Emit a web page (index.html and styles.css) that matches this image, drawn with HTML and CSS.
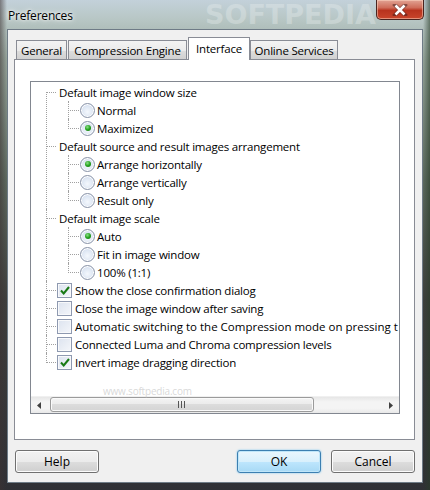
FILE: index.html
```html
<!DOCTYPE html>
<html lang="en">
    <head>
        <meta charset="UTF-8" />
        <title>Preferences</title>
        <link rel="stylesheet" href="styles.css">
    </head>
    <body>
        <div class="window">
            <div class="titlebar">
                <div class="title">Preferences</div>
                <div class="watermark">SOFTPEDIA</div>
                <div class="close">
                    <svg width="16" height="12" viewBox="0 0 16 12">
                        <path d="M3 1 L13 11 M13 1 L3 11" stroke="#3a1a1a" stroke-width="4" stroke-linecap="square" opacity="0.5"/>
                        <path d="M3.5 1.5 L12.5 10.5 M12.5 1.5 L3.5 10.5" stroke="#fff" stroke-width="2.6"/>
                    </svg>
                </div>
            </div>
            <div class="client">
                <div class="tabs">
                    <div class="tab tab-general">General</div>
                    <div class="tab tab-compression">Compression Engine</div>
                    <div class="tab tab-interface active">Interface</div>
                    <div class="tab tab-online">Online Services</div>
                </div>
                <div class="panel">
                    <div class="treebox">
                        <div class="tree-view">
                            <ul class="tree">
                                <li>
                                    <div class="row group">Default image window size</div>
                                    <ul>
                                        <li><div class="row"><span class="radio"></span>Normal</div></li>
                                        <li><div class="row"><span class="radio checked"></span>Maximized</div></li>
                                    </ul>
                                </li>
                                <li>
                                    <div class="row group">Default source and result images arrangement</div>
                                    <ul>
                                        <li><div class="row"><span class="radio checked"></span>Arrange horizontally</div></li>
                                        <li><div class="row"><span class="radio"></span>Arrange vertically</div></li>
                                        <li><div class="row"><span class="radio"></span>Result only</div></li>
                                    </ul>
                                </li>
                                <li>
                                    <div class="row group">Default image scale</div>
                                    <ul>
                                        <li><div class="row"><span class="radio checked"></span>Auto</div></li>
                                        <li><div class="row"><span class="radio"></span>Fit in image window</div></li>
                                        <li><div class="row"><span class="radio"></span>100% (1:1)</div></li>
                                    </ul>
                                </li>
                                <li><div class="row"><span class="check checked"></span>Show the close confirmation dialog</div></li>
                                <li><div class="row"><span class="check"></span>Close the image window after saving</div></li>
                                <li><div class="row long"><span class="check"></span>Automatic switching to the Compression mode on pressing t</div></li>
                                <li><div class="row"><span class="check"></span>Connected Luma and Chroma compression levels</div></li>
                                <li><div class="row"><span class="check checked"></span>Invert image dragging direction</div></li>
                            </ul>
                        </div>
                        <div class="hscroll">
                            <div class="arrow">
                                <svg width="5" height="7" viewBox="0 0 5 7"><path d="M4 0 L0 3.5 L4 7 Z" fill="#404040"/></svg>
                            </div>
                            <div class="track">
                                <div class="thumb">
                                    <svg width="8" height="7" viewBox="0 0 8 7"><path d="M0.5 0 V7 M3.5 0 V7 M6.5 0 V7" stroke="#555" stroke-width="1"/></svg>
                                </div>
                            </div>
                            <div class="arrow">
                                <svg width="5" height="7" viewBox="0 0 5 7"><path d="M1 0 L5 3.5 L1 7 Z" fill="#404040"/></svg>
                            </div>
                        </div>
                        <div class="watermark-small">www.softpedia.com</div>
                    </div>
                </div>
                <div class="buttons">
                    <button class="button">Help</button>
                    <div class="spacer"></div>
                    <button class="button default">OK</button>
                    <button class="button">Cancel</button>
                </div>
            </div>
        </div>
    </body>
</html>
```

FILE: styles.css
```css
* {
    box-sizing: border-box;
}
body {
    margin: 0;
    font-family: "Open Sans", "Noto Sans", sans-serif;
    font-size: 11.5px;
    letter-spacing: -0.2px;
    color: #000;
}
.window {
    width: 430px;
    height: 490px;
    padding: 0 7px 7px 7px;
    display: flex;
    flex-direction: column;
    background:
        linear-gradient(to right, rgba(60, 50, 50, 0.55) 0, rgba(60, 50, 50, 0) 7px, rgba(60, 50, 50, 0) 423px, rgba(40, 60, 40, 0.6) 430px),
        linear-gradient(to bottom, #c3d1da 0, #b7c6c4 20px, #95a49a 60px, #5d6a5f 180px, #3e3f3d 300px, #2f3035 490px);
}
.titlebar {
    height: 29px;
    display: flex;
    align-items: flex-start;
    position: relative;
}
.title {
    padding: 8px 0 0 1px;
    font-size: 12px;
    line-height: 16px;
    text-shadow: 0 0 6px #fff, 0 0 3px #fff;
}
.watermark {
    position: absolute;
    left: 198px;
    top: -1px;
    font-family: "DejaVu Sans", sans-serif;
    font-weight: bold;
    font-size: 27px;
    letter-spacing: 0;
    color: rgba(235, 240, 240, 0.35);
}
.close {
    margin-left: auto;
    margin-right: -1px;
    width: 48px;
    height: 20px;
    border: 1px solid #4a2420;
    border-top: none;
    border-radius: 0 0 5px 5px;
    background: linear-gradient(to bottom, #e2a394 0, #cf6d5a 40%, #b8331e 55%, #c9452b 100%);
    box-shadow: inset 0 0 0 1px rgba(255, 220, 200, 0.5);
    display: flex;
    justify-content: center;
    align-items: center;
    position: relative;
    z-index: 1;
}
.client {
    flex: 1;
    background-color: #f0f0f0;
    border: 1px solid #6e7b86;
    padding: 8px 7px 8px 6px;
    display: flex;
    flex-direction: column;
}
.tabs {
    height: 22px;
    display: flex;
    align-items: flex-end;
    margin-bottom: -1px;
    padding-left: 2px;
}
.tab {
    height: 20px;
    border: 1px solid #898c95;
    border-bottom: none;
    background: linear-gradient(to bottom, #f3f3f3 0, #ebebeb 50%, #dddddd 51%, #cfcfcf 100%);
    padding-top: 1px;
    line-height: 18px;
    text-align: center;
    white-space: nowrap;
}
.tab-general {
    width: 51px;
}
.tab-compression {
    width: 119px;
    margin-left: 1px;
}
.tab-interface {
    width: 62px;
    margin-left: 1px;
}
.tab-online {
    width: 88px;
}
.tab.active {
    height: 23px;
    background: #fff;
    position: relative;
    z-index: 1;
    line-height: 20px;
}
.panel {
    height: 381px;
    border: 1px solid #898c95;
    background-color: #fff;
    padding: 21px 14px 0 15px;
}
.treebox {
    width: 370px;
    height: 333px;
    border: 1px solid #828790;
    display: flex;
    flex-direction: column;
    position: relative;
}
.tree-view {
    flex: 1;
    overflow: hidden;
    padding: 1px 0 0 26px;
}
.tree,
.tree ul {
    list-style: none;
    margin: 0;
    padding: 0;
}
.tree ul {
    padding-left: 23px;
}
.tree li {
    position: relative;
}
.tree li::before {
    content: "";
    position: absolute;
    left: -11px;
    top: 9px;
    width: 10px;
    border-top: 1px dotted #a0a0a0;
}
.tree li::after {
    content: "";
    position: absolute;
    left: -11px;
    top: 0;
    bottom: 0;
    border-left: 1px dotted #a0a0a0;
}
.tree > li:first-child::after {
    top: 9px;
}
.tree li:last-child::after {
    bottom: auto;
    height: 10px;
}
.tree ul li::before {
    left: -12px;
    width: 11px;
}
.tree ul li::after {
    left: -12px;
}
.row {
    height: 18px;
    display: flex;
    align-items: center;
    white-space: nowrap;
    line-height: 18px;
}
.row.long {
    letter-spacing: 0;
}
.row.group {
    padding: 2px 0 0 2px;
}
.row:has(.radio),
.row:has(.check) {
    padding-top: 2px;
}
.radio {
    flex-shrink: 0;
    width: 15px;
    height: 15px;
    border-radius: 50%;
    border: 1px solid #8a94a8;
    background: radial-gradient(circle at 50% 60%, #f4f8fd 0, #dde6f3 55%, #c4d1e6 100%);
    box-shadow: inset 0 0 0 1px #fff;
    margin-right: 2px;
    margin-top: -2px;
    display: flex;
    justify-content: center;
    align-items: center;
}
.radio.checked::after {
    content: "";
    width: 6px;
    height: 6px;
    border-radius: 50%;
    background: radial-gradient(circle at 40% 35%, #8fe08a 0, #25a31f 50%, #106a0c 100%);
}
.check {
    flex-shrink: 0;
    width: 15px;
    height: 15px;
    border: 1px solid #8e99b0;
    background: linear-gradient(135deg, #dce3ef 0, #f4f6fa 100%);
    box-shadow: inset 0 0 0 1px #f8f9fb;
    margin-right: 3px;
    margin-top: -2px;
    position: relative;
}
.check.checked::after {
    content: "";
    position: absolute;
    left: 2px;
    top: 2px;
    width: 10px;
    height: 9px;
    background: url("data:image/svg+xml;utf8,<svg xmlns='http://www.w3.org/2000/svg' width='10' height='9' viewBox='0 0 10 9'><path d='M1 4.5 L3.7 7.5 L9 1' fill='none' stroke='%23197a15' stroke-width='2'/></svg>");
}
.watermark-small {
    position: absolute;
    left: 72px;
    top: 302px;
    font-size: 10px;
    color: rgba(190, 190, 190, 0.6);
}
.hscroll {
    height: 17px;
    display: flex;
    background: linear-gradient(to bottom, #e6e6e6 0, #f4f4f4 30%, #f4f4f4 70%, #e8e8e8 100%);
    border-top: 1px solid #f0f0f0;
}
.arrow {
    width: 17px;
    display: flex;
    justify-content: center;
    align-items: center;
}
.track {
    flex: 1;
    padding: 0 2px 1px 2px;
}
.thumb {
    width: 264px;
    height: 15px;
    border: 1px solid #9b9b9b;
    border-radius: 3px;
    background: linear-gradient(to bottom, #f4f4f4 0, #ececec 45%, #dcdcdc 50%, #d4d4d4 100%);
    box-shadow: inset 0 0 0 1px #fafafa;
    display: flex;
    justify-content: center;
    align-items: center;
}
.buttons {
    margin-top: 10px;
    display: flex;
    padding-left: 1px;
}
.spacer {
    flex: 1;
}
.button {
    width: 84px;
    height: 23px;
    font-family: inherit;
    font-size: 12px;
    letter-spacing: 0;
    color: #000;
    border: 1px solid #707070;
    border-radius: 3px;
    background: linear-gradient(to bottom, #f2f2f2 0, #ebebeb 50%, #dddddd 51%, #cfcfcf 100%);
    box-shadow: inset 0 0 0 1px #fcfcfc;
    padding: 0;
}
.button + .button {
    margin-left: 10px;
}
.button.default {
    border-color: #3c7fb1;
    background: linear-gradient(to bottom, #eaf6fd 0, #d9f0fc 50%, #bee6fd 51%, #a7d9f5 100%);
    box-shadow: inset 0 0 0 1px #c0e6f9, 0 0 2px #6fc3f0;
}
```
